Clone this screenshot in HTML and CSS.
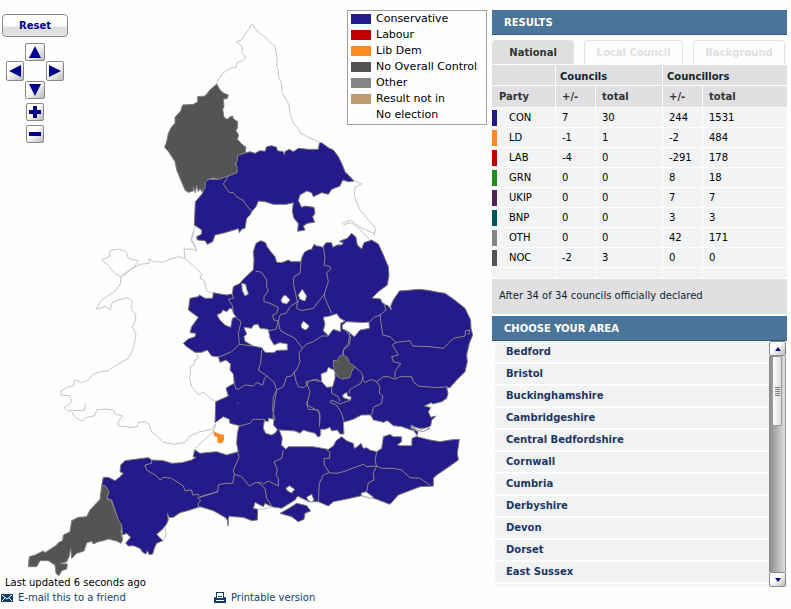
FILE: index.html
```html
<!DOCTYPE html>
<html lang="en">
<head>
<meta charset="utf-8">
<title>Council election results map</title>
<link rel="stylesheet" href="styles.css">
</head>
<body>
<main class="page">
  <section class="map-column">
    <div class="map-stage">
      <svg class="map" viewBox="0 0 1476 1728" role="img" aria-label="Map of English councils">
        <!-- coasts and areas without an election -->
        <g class="coast">
          <g transform="translate(450 30)">
            <path d="M200 222L204 208L212 203L212 195L225 185L240 175L258 172L262 158L275 153L286 145L284 138L275 125L278 117L272 105L260 95L275 90L277 82L300 55L302 47L308 43L325 68L348 82L352 90L375 108L382 150L379 160L385 182L385 195L395 225L395 245L417 285L420 310L430 340L448 360L450 368L475 382L512 398"/>
            <path d="M612 513L635 522L615 532L613 560L630 600L660 635L678 655L672 678M575 640L595 633L605 632L630 652L675 672M580 644L605 638L640 668L662 692M135 645L130 665L122 690L138 715"/>
          </g>
          <g transform="translate(150 690)">
            <path d="M432 0L425 30L435 45L440 63L430 58L402 57L405 85L385 80L360 88L340 97L310 95L297 85L298 100L270 103L240 120L212 143L212 160L200 178L185 190L155 210L138 237L155 233L165 228L180 240L187 218L210 208L235 203L247 215L243 235L257 255L257 268L247 290L258 315L250 355L235 385L200 405L175 422L140 428L125 437L115 450L95 458L82 452L75 450L70 467L50 473L33 483L33 495L60 497L65 515L58 523L42 533L55 545L60 541L103 542L107 520M65 545L75 562L95 573L110 562L135 557L140 540L165 537L190 540L195 552L217 558L205 575L205 588L230 590L240 593L262 590L265 578L285 575L297 583L305 605L320 617L340 637L375 643L405 637L420 618L450 605L485 598L497 582"/>
            <path d="M155 90L178 80L180 62L205 57L228 65L235 85L265 93L255 108L212 140L195 130L185 120L175 105L160 95ZM405 85L435 112L455 132L450 145L463 152L470 182L488 190M440 370L445 385L435 390L432 405L420 410L422 430L418 440L425 470L445 493L462 487L480 505L497 515M497 582L490 605L455 637L435 655L430 670"/>
          </g>
        </g>

        <!-- north -->
        <g transform="translate(450 30)">
          <path class="con" d="M262 436L300 425L315 430L330 422L345 424L350 410L365 407L380 412L382 422L400 425L403 434L406 424L418 418L430 425L445 415L475 418L505 418L508 400L515 398L535 413L550 420L565 440L575 460L585 485L600 500L612 513L595 515L578 510L570 528L545 538L535 553L515 548L490 560L485 548L470 543L450 555L445 572L455 592L465 588L492 592L495 610L488 620L494 637L472 640L460 648L465 660L443 664L445 640L432 625L427 605L430 578L410 583L370 583L345 575L325 573L318 590L305 605L300 615L290 625L285 655L275 658L268 668L265 656L225 668L195 675L188 695L172 703L165 692L142 690L140 680L155 672L155 660L133 645L136 575L158 550L166 515L175 508L205 508L236 497L261 488L258 460Z"/>
          <path class="border" d="M236 497L220 522L238 548L250 548L260 560L280 572L285 580L305 605"/>
          <path class="noc" d="M200 222L210 240L222 250L235 255L232 265L220 268L222 290L218 297L222 322L232 328L240 320L248 318L250 326L263 335L262 355L258 362L266 375L262 388L275 402L288 412L286 428L262 436L262 455L255 460L261 470L261 488L236 497L205 508L190 504L175 508L166 515L165 535L155 545L150 535L145 545L140 526L136 548L130 530L130 543L115 547L105 540L80 480L75 455L58 428L44 412L50 395L55 370L65 350L75 340L75 322L92 303L98 285L130 283L143 275L143 260L165 258L180 240Z"/>
        </g>

        <!-- midlands, east and south -->
        <path class="con" d="M760 810L762 780L760 755L768 730L782 722L797 728L800 738L812 755L825 770L830 787L845 788L865 780L873 785L903 785L906 772L913 757L925 750L935 748L942 733L950 738L960 739L970 743L972 735L980 728L995 728L998 742L1012 735L1025 735L1030 728L1018 724L1042 715L1055 700L1068 712L1072 735L1085 747L1092 728L1115 720L1135 732L1148 760L1165 800L1167 825L1162 855L1135 875L1116 894L1142 897L1145 907L1156 914L1164 917L1174 930L1172 918L1180 900L1198 873L1225 871L1255 868L1285 871L1315 877L1335 880L1360 897L1395 925L1412 960L1413 985L1418 1005L1408 1030L1400 1065L1402 1085L1395 1115L1370 1140L1350 1163L1340 1163L1344 1180L1340 1195L1325 1205L1298 1212L1294 1208L1273 1218L1292 1223L1285 1235L1292 1252L1308 1248L1295 1260L1292 1278L1275 1285L1250 1285L1235 1275L1232 1283L1254 1295L1250 1310L1290 1320L1320 1325L1350 1320L1378 1318L1372 1360L1375 1380L1340 1405L1310 1425L1300 1435L1300 1458L1260 1460L1195 1485L1170 1513L1130 1498L1105 1490L1085 1487L1040 1497L1000 1505L985 1518L955 1505L925 1505L893 1488L885 1500L845 1525L815 1520L795 1510L790 1520L765 1507L760 1525L773 1528L772 1560L755 1562L730 1552L700 1550L688 1548L685 1555L684 1578L682 1560L675 1552L640 1532L600 1520L570 1530L540 1538L520 1552L507 1552L502 1540L505 1560L498 1575L485 1590L470 1603L488 1622L470 1630L464 1642L458 1662L448 1664L442 1652L438 1662L428 1657L420 1645L400 1637L385 1638L377 1629L392 1612L380 1600L368 1605L365 1575L355 1560L335 1500L320 1495L327 1475L315 1458L305 1458L310 1432L325 1432L345 1442L355 1435L370 1420L360 1415L362 1395L375 1382L405 1378L445 1373L455 1380L490 1382L515 1390L545 1388L575 1380L588 1372L579 1370L585 1350L600 1360L650 1355L680 1365L715 1355L710 1330L712 1300L718 1277L690 1270L688 1258L670 1250L645 1268L647 1205L685 1188L678 1165L688 1158L703 1150L700 1122L690 1110L692 1092L678 1080L660 1087L655 1070L635 1068L622 1050L605 1057L585 1057L560 1040L550 1030L565 1017L585 1010L588 1000L570 998L575 980L595 952L565 930L570 895L595 890L598 885L615 895L638 895L640 878L660 882L680 885L697 882L700 860L720 850L730 838L745 823Z"/>
        <path class="con" d="M840 1540L870 1523L890 1510L920 1517L932 1533L915 1540L912 1558L895 1565L875 1550Z"/>

        <!-- county boundaries -->
        <g class="border">
          <path transform="translate(510 660)" d="M257 153L275 157L290 180L290 200L295 212L282 230L282 245L300 250L325 262L320 280L308 285L312 300L325 303L330 330L345 340L375 355L397 385L387 400L390 425L380 450L372 455L377 480L385 500L400 503L410 495L408 485L435 480L447 486M325 303L330 285L350 278L360 260L375 250L387 243M393 125L390 160L372 170L370 190L382 245L380 265L395 272L430 265L463 222M460 83L465 110L462 135L480 140L482 148L470 158L475 185L463 222L465 235L485 280M187 222L190 235L175 238L188 258L190 285L213 305L205 340L208 373L250 378M208 373L185 395L145 412M275 390L272 430L265 450L290 467L312 487L320 510L315 540L308 600M193 490L197 505L205 508L225 495L250 498L260 488L278 495L283 478L290 467M320 510L340 500L350 470L365 468L373 455M397 385L410 372L430 365L455 348L475 348M325 303L318 328L295 332M415 485L412 495L420 515L410 555L440 570L450 580L448 600M540 335L535 370L520 390L520 405"/>
          <path transform="translate(930 660)" d="M222 250L228 270L210 285L190 293L180 305M210 285L218 345L240 350L258 367L300 362L308 378L360 380L400 385L415 370L430 355L465 348L467 332L480 330L475 345M258 367L247 375L265 405L245 410L250 425L272 430L255 455L255 475M110 335L122 350L118 375L100 390L98 405M133 440L155 458L160 483L165 487L185 478L200 485L220 470L235 470L255 478L270 470L305 470L310 485L325 498L380 503L413 500M160 470L152 490L130 503L118 510L118 520M200 485L210 500L208 520L218 527L215 550L190 562L185 585M122 540L100 548L90 552L65 540L60 548L80 555L95 580L102 605M65 500L65 520L85 530L90 545M35 485L20 478L0 482"/>
          <path transform="translate(600 1140)" d="M230 30L220 50L218 90L225 120M115 138L130 135L150 130L160 118L185 118L195 118M112 215L118 230L100 270L103 283L125 290L148 318L165 308L185 308L190 312L205 303L235 318L235 295L228 285L232 270L222 245L245 235L250 210M103 283L98 310L75 310L55 315L53 335L0 350M175 308L195 325L200 355L215 378M320 65L325 88L355 90L360 110L358 140M375 205L390 217L388 235L372 235L373 255L388 278L370 285L358 310L355 365M388 278L410 280L430 275L465 262L490 253L500 260L530 258L545 265L580 265L605 270L630 293L660 295L690 315M530 215L525 245L530 258L520 280L522 300L505 308L500 335M112 67L115 70"/>
          <path transform="translate(30 1200)" d="M567 291L565 283L548 285L545 270L525 272L520 258L485 235L460 232L450 240L440 228L410 210L405 195L425 190L425 178M560 291L572 302L565 308L565 322M567 293L625 275"/>
        </g>

        <!-- unitary areas and London, no election -->
        <g class="blank" transform="translate(510 660)">
          <path d="M215 190L227 193L230 207L235 222L225 228L217 212ZM141 285L155 278L158 270L170 275L180 265L187 268L190 280L198 290L187 295L182 322L165 315L150 300ZM333 240L340 228L347 226L360 240L350 252L336 248ZM385 225L397 208L410 228L405 243L390 238ZM393 315L400 303L418 318L408 330L396 325ZM222 322L245 325L250 316L263 312L270 325L295 328L300 355L312 375L330 368L352 372L352 390L320 391L312 398L285 397L275 383L250 378L225 364L222 350L230 342ZM460 292L480 288L500 281L510 295L525 303L512 310L512 335L490 328L475 347L460 332L465 312Z"/>
          <path d="M517 315L530 305L580 308L597 306L598 325L570 330L553 350L535 335L518 327ZM453 462L470 455L475 442L495 452L495 475L488 500L470 502L455 485ZM518 525L530 517L533 528L543 530L542 540L520 533Z"/>
        </g>
        <g class="blank" transform="translate(600 1140)">
          <path d="M193 122L205 125L205 115L222 118L220 135L232 148L227 158L215 165L197 160L190 145ZM258 325L268 317L284 328L275 339L262 332ZM320 352L335 343L342 360L335 367L325 362ZM483 340L498 335L522 353L512 355L485 347Z"/>
          <path d="M238 150L285 153L300 160L310 150L325 155L345 160L355 172L362 165L362 148L375 148L390 142L395 153L412 150L420 162L432 162L430 127L460 118L485 105L512 105L520 120L550 127L562 122L580 137L605 140L640 152L652 168L636 175L635 197L605 197L592 195L605 185L605 170L580 170L570 163L550 170L545 205L530 215L510 210L500 203L490 205L483 190L472 200L463 205L460 190L440 182L425 170L408 182L400 198L385 208L340 200L265 200L258 208L244 195L247 175Z"/>
          <path class="islet" d="M632 138L665 148L680 143L690 145L670 155L650 150Z"/>
        </g>
        <path class="coast" d="M495 1580L498 1605L490 1623M773 1528L798 1526L815 1520M1083 1487L1120 1497M925 1505L895 1492M1240 1290L1250 1308"/>
        <path class="noc" d="M1000 1080L1010 1083L1020 1068L1028 1065L1042 1072L1048 1088L1065 1100L1055 1115L1050 1132L1028 1138L1012 1130L1002 1110Z"/>
        <path class="noc" transform="translate(30 1200)" d="M275 258L285 256L297 275L290 297L303 302L325 360L335 375L333 395L338 420L333 430L320 423L295 417L280 422L265 425L250 432L245 424L230 428L222 453L200 460L185 475L182 445L177 470L170 485L150 491L172 492L170 507L155 512L147 527L138 520L135 495L115 482L90 482L80 500L55 500L58 470L75 465L100 453L105 458L140 435L145 428L158 422L160 405L180 395L185 362L205 352L230 350L240 330L270 298Z"/>
        <path class="ld" d="M640 1293L652 1300L672 1305L672 1320L665 1330L652 1328L652 1312L642 1307Z"/>
      </svg>

      <div class="controls">
        <button class="reset" type="button">Reset</button>
        <div class="compass">
          <button class="key key-up" type="button" aria-label="Move up"><svg viewBox="0 0 12 12"><path d="M6 0L12 12H0Z"/></svg></button>
          <button class="key tall key-left" type="button" aria-label="Move left"><svg viewBox="0 0 12 12"><path d="M0 6L12 0V12Z"/></svg></button>
          <button class="key tall key-right" type="button" aria-label="Move right"><svg viewBox="0 0 12 12"><path d="M12 6L0 0V12Z"/></svg></button>
          <button class="key key-down" type="button" aria-label="Move down"><svg viewBox="0 0 12 12"><path d="M6 12L12 0H0Z"/></svg></button>
        </div>
        <button class="key zoom-key" type="button" aria-label="Zoom in"><svg viewBox="0 0 12 12"><path d="M4 0H8V4H12V8H8V12H4V8H0V4H4Z"/></svg></button>
        <button class="key zoom-key" type="button" aria-label="Zoom out"><svg viewBox="0 0 12 12"><path d="M0 4H12V8H0Z"/></svg></button>
      </div>

      <ul class="legend">
        <li><span class="swatch bg-con"></span>Conservative</li>
        <li><span class="swatch bg-lab"></span>Labour</li>
        <li><span class="swatch bg-ld"></span>Lib Dem</li>
        <li><span class="swatch bg-noc"></span>No Overall Control</li>
        <li><span class="swatch bg-oth"></span>Other</li>
        <li><span class="swatch bg-wait"></span>Result not in</li>
        <li><span class="swatch"></span>No election</li>
      </ul>
    </div>
    <p class="updated">Last updated 6 seconds ago</p>
    <nav class="links">
      <a href="#email"><svg class="icon" viewBox="0 0 12 12"><path fill="#123d6b" d="M0 2H12V10H0Z"/><path fill="none" stroke="#fff" d="M1 3L6 7L11 3M1 9L4 6M11 9L8 6"/></svg>E-mail this to a friend</a>
      <a href="#print"><svg class="icon" viewBox="0 0 12 12"><path fill="#123d6b" d="M2 0H10V5H11L12 6V11H0V6L1 5H2Z"/><path fill="#fff" d="M3 1H9V6H3ZM2 8H10V9H2Z"/><path fill="#123d6b" d="M4 4H8V5H4Z"/></svg>Printable version</a>
    </nav>
  </section>

  <aside class="side">
    <h2 class="bar">RESULTS</h2>
    <div class="tabs">
      <button class="tab active" type="button">National</button>
      <button class="tab local" type="button">Local Council</button>
      <button class="tab" type="button">Background</button>
    </div>
    <table class="results">
      <colgroup><col class="c-party"><col class="c-diff"><col class="c-total"><col class="c-diff"><col></colgroup>
      <thead>
        <tr class="groups"><td></td><th colspan="2">Councils</th><th colspan="2">Councillors</th></tr>
        <tr class="heads"><th>Party</th><th>+/-</th><th>total</th><th>+/-</th><th>total</th></tr>
      </thead>
      <tbody>
        <tr><th><span class="party"><i class="bg-con"></i>CON</span></th><td>7</td><td>30</td><td>244</td><td>1531</td></tr>
        <tr><th><span class="party"><i class="bg-ld"></i>LD</span></th><td>-1</td><td>1</td><td>-2</td><td>484</td></tr>
        <tr><th><span class="party"><i class="bg-lab"></i>LAB</span></th><td>-4</td><td>0</td><td>-291</td><td>178</td></tr>
        <tr><th><span class="party"><i class="bg-grn"></i>GRN</span></th><td>0</td><td>0</td><td>8</td><td>18</td></tr>
        <tr><th><span class="party"><i class="bg-ukip"></i>UKIP</span></th><td>0</td><td>0</td><td>7</td><td>7</td></tr>
        <tr><th><span class="party"><i class="bg-bnp"></i>BNP</span></th><td>0</td><td>0</td><td>3</td><td>3</td></tr>
        <tr><th><span class="party"><i class="bg-oth"></i>OTH</span></th><td>0</td><td>0</td><td>42</td><td>171</td></tr>
        <tr><th><span class="party"><i class="bg-noc"></i>NOC</span></th><td>-2</td><td>3</td><td>0</td><td>0</td></tr>
        <tr class="spacer"><td></td><td></td><td></td><td></td><td></td></tr>
      </tbody>
    </table>
    <p class="declared">After 34 of 34 councils officially declared</p>
    <h2 class="bar">CHOOSE YOUR AREA</h2>
    <div class="chooser">
      <ul class="areas">
        <li><a href="#bedford">Bedford</a></li>
        <li><a href="#bristol">Bristol</a></li>
        <li><a href="#buckinghamshire">Buckinghamshire</a></li>
        <li><a href="#cambridgeshire">Cambridgeshire</a></li>
        <li><a href="#central-bedfordshire">Central Bedfordshire</a></li>
        <li><a href="#cornwall">Cornwall</a></li>
        <li><a href="#cumbria">Cumbria</a></li>
        <li><a href="#derbyshire">Derbyshire</a></li>
        <li><a href="#devon">Devon</a></li>
        <li><a href="#dorset">Dorset</a></li>
        <li><a href="#east-sussex">East Sussex</a></li>
        <li class="more"></li>
      </ul>
      <div class="scroll">
        <button type="button" aria-label="Scroll up"><svg viewBox="0 0 6 4"><path d="M3 0L6 4H0Z"/></svg></button>
        <div class="track"><div class="thumb"><span class="grip"></span></div></div>
        <button type="button" aria-label="Scroll down"><svg viewBox="0 0 6 4"><path d="M3 4L6 0H0Z"/></svg></button>
      </div>
    </div>
  </aside>
</main>
</body>
</html>
```
FILE: styles.css
```css
* { box-sizing: border-box; }

body {
  margin: 0;
  background: #fefefe;
  color: #000;
  font: 10px/16px Verdana, "DejaVu Sans", sans-serif;
}

ul, p, h2 { margin: 0; padding: 0; }
ul { list-style: none; }
button { padding: 0; font: inherit; cursor: pointer; }
a { color: #123d6b; text-decoration: none; }

.page {
  display: grid;
  grid-template-columns: minmax(0, 1fr) 295px;
  padding-right: 4px;
}

/* map */
.map-stage { position: relative; }
.map { display: block; width: 100%; height: auto; }
.map path { stroke-width: 3; stroke-linejoin: round; }
.coast { fill: none; stroke: #c4c4c4; }
.border { fill: none; stroke: #888; }
.blank { fill: #fefefe; stroke: #888; }
.con { fill: #241a8a; stroke: #777; }
.noc { fill: #545454; stroke: #808080; }
.ld { fill: #ff8a20; }

.controls {
  position: absolute;
  top: 14px;
  left: 2px;
  width: 66px;
  display: flex;
  flex-direction: column;
  align-items: center;
  gap: 4px;
}
.reset {
  width: 100%;
  height: 23px;
  margin-bottom: 2px;
  border: 1px solid #888;
  border-radius: 4px;
  background: linear-gradient(#fff 0 50%, #ddd 60%, #e6e6e6);
  color: #00008b;
  font-weight: bold;
}
.compass {
  display: grid;
  grid-template: 18px 20px 18px / 18px 22px 18px;
  place-items: center;
}
.key {
  width: 20px;
  height: 18px;
  display: grid;
  place-items: center;
  border: 1px solid #888;
  border-radius: 2px;
  background: linear-gradient(135deg, #fff 40%, #bbb);
}
.key svg { width: 12px; height: 12px; fill: #00008b; }
.key.tall, .zoom-key { width: 18px; }
.key.tall { height: 20px; }
.key-up { grid-area: 1 / 2; }
.key-left { grid-area: 2 / 1; }
.key-right { grid-area: 2 / 3; }
.key-down { grid-area: 3 / 2; }

.legend {
  position: absolute;
  top: 10px;
  right: 5px;
  width: 140px;
  padding: 0 3px 1px;
  border: 1px solid #a0a0a0;
  background: #fefefe;
  font-size: 11px;
}
.legend li { display: flex; align-items: center; gap: 5px; white-space: nowrap; }
.swatch { width: 20px; height: 10px; flex: none; }

.bg-con { background: #241a8a; }
.bg-lab { background: #c00000; }
.bg-ld { background: #ff8a20; }
.bg-noc { background: #545454; }
.bg-oth { background: #868686; }
.bg-wait { background: #c09a72; }
.bg-grn { background: #268c22; }
.bg-ukip { background: #552056; }
.bg-bnp { background: #005555; }

.updated { padding-left: 5px; line-height: 14px; }
.links { display: grid; grid-template-columns: 213px auto; padding-left: 1px; }
.links a { display: flex; align-items: center; gap: 5px; }
.icon { width: 12px; height: 12px; }

/* results panel */
.side { padding-top: 10px; }
.bar {
  height: 25px;
  padding-left: 12px;
  border-bottom: 1px solid #315b7c;
  background: #4a7599;
  color: #fff;
  font-size: 10px;
  line-height: 25px;
}
.tabs { display: flex; gap: 10px; padding: 5px 2px 1px 0; }
.tab {
  flex: 92 1 0;
  height: 24px;
  border: 1px solid #e0e0e2;
  border-bottom: 0;
  border-radius: 4px 4px 0 0;
  background: #fefefe;
  color: #e0e0e2;
  font-weight: bold;
}
.tab.local { flex-grow: 99; }
.tab.active { flex-grow: 82; background: #e0e0e2; color: #333; }

.results { width: 100%; table-layout: fixed; border-collapse: separate; border-spacing: 0; }
.c-party { width: 64px; }
.c-diff { width: 40px; }
.c-total { width: 67px; }
.results th, .results td {
  height: 20px;
  padding: 0 0 0 6px;
  border-right: 1px solid #fff;
  border-bottom: 1px solid #fff;
  background: #f1f3f5;
  line-height: 16px;
  text-align: left;
}
.results th:last-child, .results td:last-child { border-right: 0; }
.results thead th, .results thead td { background: #e0e0e2; color: #333; }
.results .groups > * { height: 21px; }
.results .groups th { padding: 4px 0 0 4px; color: #12262f; }
.results .heads th { height: 22px; }
.results .heads th:first-child { padding-left: 7px; }
.results tbody th { padding-left: 0; font-weight: normal; }
.results .spacer td { height: 11px; }
.party { display: flex; gap: 12px; }
.party i { width: 5px; height: 16px; }

.declared {
  margin-bottom: 2px;
  padding: 9px 7px 10px;
  background: #e0e0e2;
  color: #12262f;
}

/* area list */
.chooser { display: flex; height: 246px; padding: 0 1px 0 3px; overflow: hidden; }
.areas { flex: 1; padding-top: 1px; }
.areas li { height: 20px; margin-bottom: 2px; background: #f1f3f5; }
.areas a {
  display: block;
  padding-left: 11px;
  color: #1d3663;
  font-weight: bold;
  line-height: 20px;
}
.scroll { width: 17px; display: flex; flex-direction: column; }
.scroll button {
  height: 15px;
  display: grid;
  place-items: center;
  border: 1px solid #888;
  border-radius: 2px;
  background: linear-gradient(135deg, #fff 40%, #bbb);
}
.scroll svg { width: 6px; height: 4px; fill: #00008b; }
.track {
  flex: 1;
  padding: 0 3px;
  border-right: 1px solid #999;
  background: linear-gradient(90deg, #888, #e0e0e0);
}
.thumb {
  height: 70px;
  display: grid;
  place-items: center;
  border: 1px solid #999;
  border-radius: 2px;
  background: linear-gradient(90deg, #fff, #ddd);
}
.grip {
  width: 5px;
  height: 9px;
  background: repeating-linear-gradient(#777 0 1px, transparent 1px 2px);
}
```
